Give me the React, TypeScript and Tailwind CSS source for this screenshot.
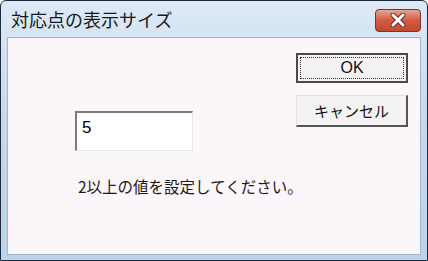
const font = { fontFamily: '"Noto Sans CJK JP", "Liberation Sans", sans-serif' };

const CloseButton = () => (
  <div className="flex h-[23px] w-[46px] items-center justify-center rounded-[4px] border border-[#6b3a35] bg-gradient-to-b from-[#e8a594] via-[#d15a3f] to-[#c44a2e]">
    <svg width="18" height="14" viewBox="0 0 18 14">
      <path d="M4 2 L14 12 M14 2 L4 12" stroke="#6b2a20" strokeWidth="5" strokeLinecap="round" />
      <path d="M4 2 L14 12 M14 2 L4 12" stroke="#ffffff" strokeWidth="3" strokeLinecap="round" />
    </svg>
  </div>
);

export default function App() {
  return (
    <div className="h-[261px] w-[428px] bg-white" style={font}>
      <div className="flex h-full w-full flex-col rounded-t-[6px] border border-[#1e2b3a] bg-gradient-to-b from-[#dde9f5] via-[#c4d8ee] to-[#bcd3ea] px-[6px] pb-[5px]">
        <div className="flex h-[36px] items-center justify-between pl-[4px] pr-0">
          <span className="text-[18px] leading-none text-[#1a1a1a]">対応点の表示サイズ</span>
          <div className="mt-[2px]">
            <CloseButton />
          </div>
        </div>
        <div className="flex flex-1 border border-[#9fb6cc] bg-[#faf6f9]">
          <div className="flex min-w-0 flex-1 flex-col pl-[67px] pt-[73px]">
            <div className="flex h-[40px] w-[118px] items-start border-t-2 border-l-2 border-b border-r border-t-[#7a7a7a] border-l-[#7a7a7a] border-b-[#e8e8e8] border-r-[#e8e8e8] bg-white pl-[5px] pt-[6px]">
              <span className="text-[17px] leading-none text-black" style={{ fontFamily: '"Liberation Sans", sans-serif' }}>5</span>
            </div>
            <div className="mt-[28px] whitespace-nowrap pl-[3px] text-[15.5px] leading-none text-[#1a1a1a]">2以上の値を設定してください。</div>
          </div>
          <div className="flex w-[126px] shrink-0 flex-col gap-[12px] pt-[15px] pl-[2px]">
            <div className="flex h-[30px] w-[112px] items-center justify-center border-2 border-[#4a4a4a] bg-[#f4f2f3] p-[2px]">
              <div className="flex h-full w-full items-center justify-center border border-dotted border-[#333]">
                <span className="text-[16px] leading-none text-[#111]" style={{ fontFamily: '"Liberation Sans", sans-serif' }}>OK</span>
              </div>
            </div>
            <div className="flex h-[32px] w-[112px] items-center justify-center border-t border-l border-b-2 border-r-2 border-t-[#e0e0e0] border-l-[#e0e0e0] border-b-[#555] border-r-[#555] bg-[#f4f2f3]">
              <span className="text-[15px] leading-none text-[#111]">キャンセル</span>
            </div>
          </div>
        </div>
      </div>
    </div>
  );
}
